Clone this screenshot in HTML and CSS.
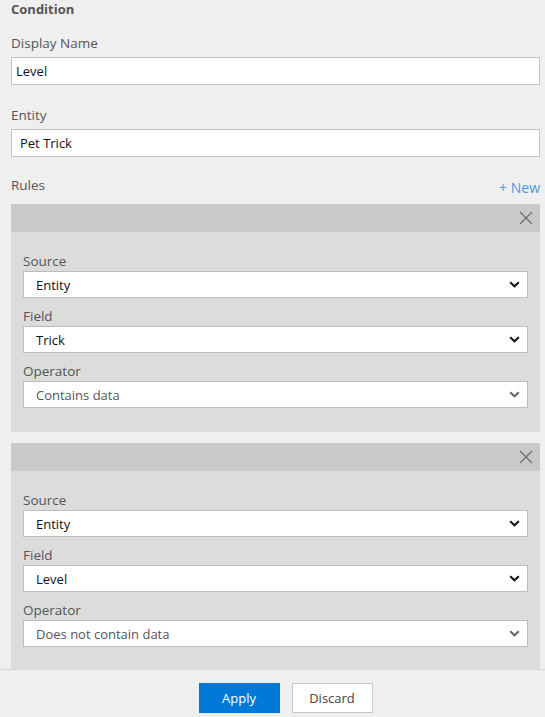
FILE: index.html
```html
<!DOCTYPE html>
<html lang="en">
<head>
    <meta charset="UTF-8">
    <meta name="viewport" content="width=device-width, initial-scale=1.0">
    <title>Condition</title>
    <link rel="stylesheet" href="styles.css">
</head>
<body>
    <div class="panel">
        <div class="content">
            <h2 class="title">Condition</h2>
            <label class="label" for="displayName">Display Name</label>
            <input class="text-input" type="text" id="displayName" value="Level">
            <label class="label label-entity" for="entity">Entity</label>
            <input class="text-input entity-input" type="text" id="entity" value="Pet Trick">

            <div class="rules-head">
                <span class="label">Rules</span>
                <a class="new-link" href="#">+ New</a>
            </div>

            <div class="rule">
                <div class="rule-bar">
                    <svg class="close" width="14" height="14" viewBox="0 0 14 14"><path d="M1 1L13 13M13 1L1 13" stroke="#6b6b6b" stroke-width="1.2" fill="none"/></svg>
                </div>
                <div class="rule-body">
                    <div class="field">
                        <label>Source</label>
                        <div class="select">
                            <span class="value">Entity</span>
                            <svg class="chev" width="11" height="7" viewBox="0 0 11 7"><path d="M1.2 1.2L5.5 5.3L9.8 1.2" stroke="#111" stroke-width="2" fill="none"/></svg>
                        </div>
                    </div>
                    <div class="field">
                        <label>Field</label>
                        <div class="select">
                            <span class="value">Trick</span>
                            <svg class="chev" width="11" height="7" viewBox="0 0 11 7"><path d="M1.2 1.2L5.5 5.3L9.8 1.2" stroke="#111" stroke-width="2" fill="none"/></svg>
                        </div>
                    </div>
                    <div class="field">
                        <label>Operator</label>
                        <div class="select muted">
                            <span class="value">Contains data</span>
                            <svg class="chev" width="11" height="7" viewBox="0 0 11 7"><path d="M1.2 1.2L5.5 5.3L9.8 1.2" stroke="#666" stroke-width="2" fill="none"/></svg>
                        </div>
                    </div>
                </div>
            </div>

            <div class="rule">
                <div class="rule-bar">
                    <svg class="close" width="14" height="14" viewBox="0 0 14 14"><path d="M1 1L13 13M13 1L1 13" stroke="#6b6b6b" stroke-width="1.2" fill="none"/></svg>
                </div>
                <div class="rule-body">
                    <div class="field">
                        <label>Source</label>
                        <div class="select">
                            <span class="value">Entity</span>
                            <svg class="chev" width="11" height="7" viewBox="0 0 11 7"><path d="M1.2 1.2L5.5 5.3L9.8 1.2" stroke="#111" stroke-width="2" fill="none"/></svg>
                        </div>
                    </div>
                    <div class="field">
                        <label>Field</label>
                        <div class="select">
                            <span class="value">Level</span>
                            <svg class="chev" width="11" height="7" viewBox="0 0 11 7"><path d="M1.2 1.2L5.5 5.3L9.8 1.2" stroke="#111" stroke-width="2" fill="none"/></svg>
                        </div>
                    </div>
                    <div class="field">
                        <label>Operator</label>
                        <div class="select muted">
                            <span class="value">Does not contain data</span>
                            <svg class="chev" width="11" height="7" viewBox="0 0 11 7"><path d="M1.2 1.2L5.5 5.3L9.8 1.2" stroke="#666" stroke-width="2" fill="none"/></svg>
                        </div>
                    </div>
                </div>
            </div>
        </div>
        <div class="footer">
            <button class="btn btn-apply">Apply</button>
            <button class="btn btn-discard">Discard</button>
        </div>
    </div>
</body>
</html>
```
FILE: styles.css
```css
*{
    margin: 0;
    padding: 0;
    box-sizing: border-box;
}
body{
    background: #efefef;
    font-family: "Open Sans", "Noto Sans", sans-serif;
    color: #555;
    width: 545px;
    height: 717px;
    overflow: hidden;
}
.panel{
    height: 717px;
    display: flex;
    flex-direction: column;
}
.content{
    height: 669px;
    flex-shrink: 0;
    overflow: hidden;
    padding: 0 5px 0 11px;
}
.title{
    font-size: 13px;
    font-weight: 700;
    line-height: 18px;
    color: #555;
    margin-bottom: 15px;
}
.label{
    display: block;
    font-size: 13.5px;
    line-height: 20px;
    color: #555;
    margin-bottom: 4px;
}
.text-input{
    display: block;
    height: 28px;
    width: 529px;
    border: 1px solid #c2c2c2;
    background: #fff;
    font-family: inherit;
    font-size: 13px;
    color: #111;
    padding: 0 4px;
    outline: none;
    margin-bottom: 20px;
}
.entity-input{
    padding-left: 8px;
    margin-bottom: 18px;
}
.rules-head{
    width: 529px;
    height: 29px;
    display: flex;
    justify-content: space-between;
    align-items: flex-start;
}
.new-link{
    color: #5296e0;
    text-decoration: none;
    font-size: 14px;
    line-height: 24px;
    padding-top: 1px;
}
.rule{
    width: 529px;
    background: #dcdcdc;
    margin-bottom: 11px;
}
.rule-bar{
    height: 28px;
    background: #c9c9c9;
    display: flex;
    justify-content: flex-end;
    align-items: center;
    padding-right: 7px;
}
.rule-body{
    padding: 19px 12px 24px 12px;
}
.field{
    margin-top: 8px;
}
.field:first-child{
    margin-top: 0;
}
.field label{
    display: block;
    font-size: 13.5px;
    line-height: 20px;
    color: #555;
}
.select{
    height: 27px;
    background: #fff;
    border: 1px solid #bdbdbd;
    display: flex;
    align-items: center;
    justify-content: space-between;
    padding: 0 7px 0 12px;
    font-size: 13px;
    color: #111;
}
.select.muted{
    color: #555;
}
.footer{
    height: 48px;
    border-top: 1px solid #d6d6d6;
    display: flex;
    justify-content: center;
    align-items: flex-start;
    padding: 13px 0 0 26px;
    gap: 12px;
}
.btn{
    height: 30px;
    width: 81px;
    font-family: inherit;
    font-size: 13px;
    cursor: pointer;
}
.btn-apply{
    background: #0078d7;
    border: 1px solid #0078d7;
    color: #fff;
}
.btn-discard{
    background: #fff;
    border: 1px solid #c8c8c8;
    color: #444;
}
```
